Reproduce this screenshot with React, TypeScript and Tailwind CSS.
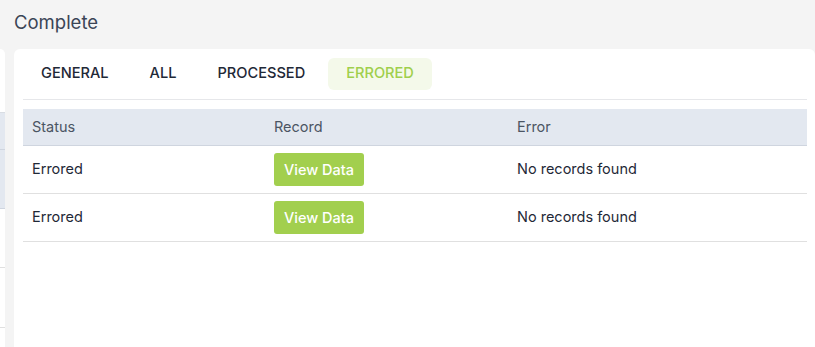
import { useState } from 'react'

const TABS = ['GENERAL', 'ALL', 'PROCESSED', 'ERRORED']

const ROWS = [
  { status: 'Errored', error: 'No records found' },
  { status: 'Errored', error: 'No records found' },
]

export default function App() {
  const [tab, setTab] = useState('ERRORED')

  return (
    <div
      className="h-[347px] w-full overflow-hidden bg-[#f4f4f4] flex flex-col"
      style={{ fontFamily: 'Inter, "Noto Sans", sans-serif' }}
    >
      {/* Titre */}
      <div className="h-[49px] shrink-0 px-[14px] pt-[10px] text-[18.5px] leading-[24px] text-[#3b4556]">
        Complete
      </div>

      <div className="flex flex-1 min-h-0">
        {/* Panneau gauche (coupé) */}
        <div className="w-[5px] shrink-0 bg-white rounded-tr-md flex flex-col">
          <div className="h-[64px] border-b border-[#d9dde3]" />
          <div className="h-[37px] bg-[#e3e8f0] border-b border-[#cfd5df]" />
          <div className="h-[59px] bg-[#e3e8f0] border-b border-[#cfd5df]" />
          <div className="h-[59px] border-b border-[#e0e0e0]" />
          <div className="h-[60px] border-b border-[#e0e0e0]" />
        </div>

        {/* Carte principale */}
        <div className="flex-1 ml-[9px] bg-white rounded-t-md pl-[9px] pr-[8px]">
          <div className="flex gap-[5px] pt-[9px] pb-[9px] border-b border-[#e6e7ea]">
            {TABS.map((t) => {
              const active = t === tab
              return (
                <button
                  key={t}
                  onClick={() => setTab(t)}
                  className={`h-[32px] px-[18px] rounded-md text-[14.6px] font-medium ${
                    active ? 'bg-[#f4f9ea] text-[#9fcf4c]' : 'text-[#1f2937]'
                  }`}
                >
                  {t}
                </button>
              )
            })}
          </div>

          <div className="mt-[9px] text-[14.5px]">
            <div className="grid grid-cols-[242px_243px_1fr] h-[37px] items-center bg-[#e3e8f0] border-b border-[#cfd5df] text-[#4b5563]">
              <div className="pl-[9px]">Status</div>
              <div className="pl-[9px]">Record</div>
              <div className="pl-[9px]">Error</div>
            </div>
            {ROWS.map((r, i) => (
              <div
                key={i}
                className="grid grid-cols-[242px_243px_1fr] h-[48px] items-center border-b border-[#e0e0e0] text-[#1f2937]"
              >
                <div className="pl-[9px] pb-[1px]">{r.status}</div>
                <div className="pl-[9px]">
                  <button className="h-[33px] w-[90px] rounded-[3px] bg-[#a2cf4e] text-white text-[14.5px] font-medium">
                    View Data
                  </button>
                </div>
                <div className="pl-[9px] pb-[1px]">{r.error}</div>
              </div>
            ))}
          </div>
        </div>
      </div>
    </div>
  )
}
